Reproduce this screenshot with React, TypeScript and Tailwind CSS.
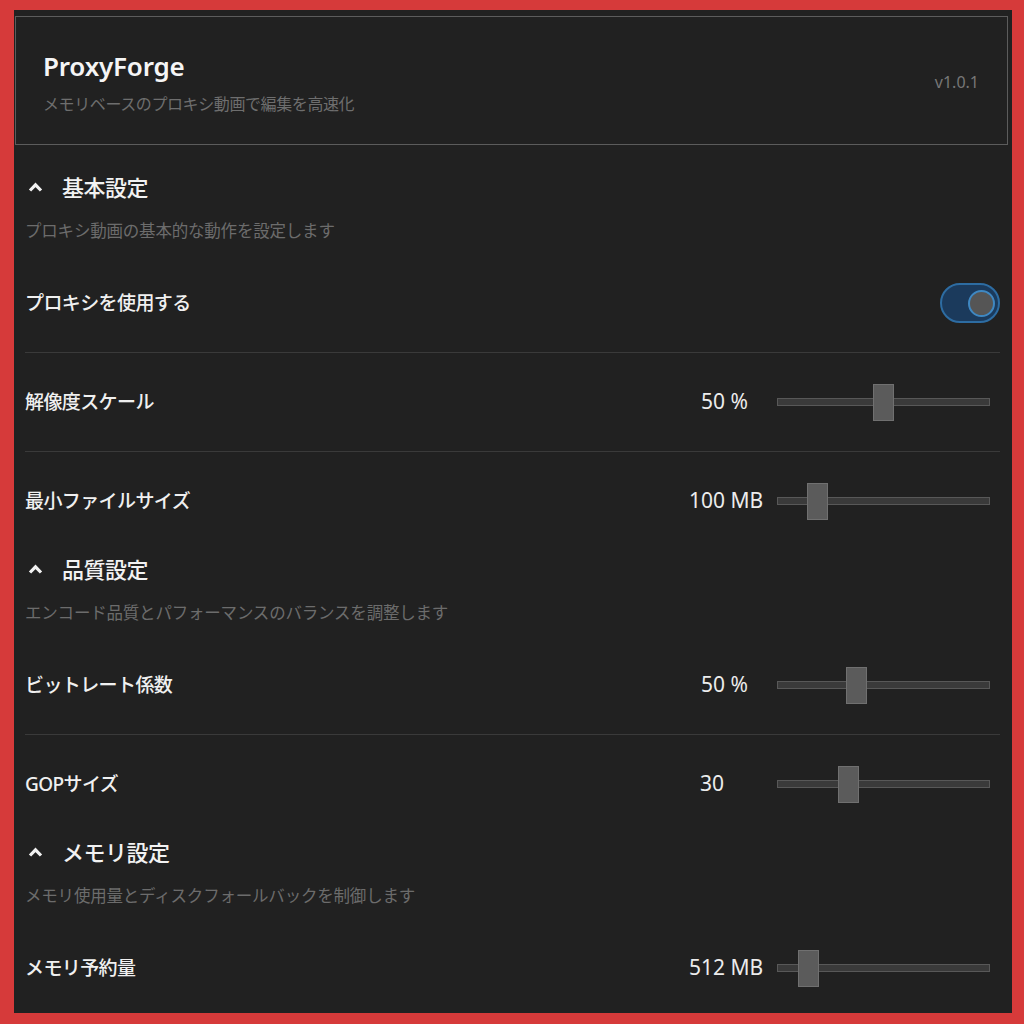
import React from "react"

const font = { fontFamily: '"Noto Sans", "Noto Sans CJK JP", sans-serif' }

type SliderRow = { label: string; value: string; pos: number; indent: number }

function ChevronUp() {
  return (
    <svg width="15" height="10" viewBox="0 0 15 10" className="ml-[3px]">
      <polyline points="2,8.5 7.5,2.8 13,8.5" fill="none" stroke="#f2f2f2" strokeWidth="3.2" strokeLinejoin="miter" />
    </svg>
  )
}

function Slider({ pos }: { pos: number }) {
  return (
    <div className="relative mr-[10px] flex h-[37px] w-[213px] items-center">
      <div className="h-[8px] w-full border border-[#585858] bg-[#3a3a3a]" />
      <div
        className="absolute top-0 h-[37px] w-[21px] border border-[#707070] bg-[#5b5b5b]"
        style={{ left: `${pos}px` }}
      />
    </div>
  )
}

function Row({ label, value, pos, indent }: SliderRow) {
  return (
    <div className="flex h-[98px] shrink-0 items-center">
      <div className="flex-1 text-[19px] font-medium tracking-[-0.6px] text-[#f0f0f0]">{label}</div>
      <div className="w-[97px] text-[21px] text-[#ececec]" style={{ paddingLeft: indent }}>
        {value}
      </div>
      <Slider pos={pos} />
    </div>
  )
}

function Section({ title, desc, children, first }: { title: string; desc: string; children: React.ReactNode; first?: boolean }) {
  return (
    <section className={first ? "shrink-0" : "mt-[4px] shrink-0"}>
      <div className="flex h-[30px] items-center">
        <ChevronUp />
        <span className="ml-[19px] text-[22px] font-medium tracking-[-0.5px] text-[#f2f2f2]">{title}</span>
      </div>
      <p className="mt-[17px] h-[24px] text-[16.5px] leading-[24px] tracking-[-0.2px] text-[#6c6c6c]">{desc}</p>
      <div className="mt-[11px]">{children}</div>
    </section>
  )
}

const Divider = () => <div className="h-px shrink-0 bg-[#3a3a3a]" />

export default function App() {
  return (
    <div className="flex h-[1024px] w-[1024px] bg-[#d63a3a] pt-[10px] pl-[14px] pr-[12px] pb-[11px]" style={font}>
      <div className="flex flex-1 flex-col overflow-hidden bg-[#212121]">
        <header className="ml-[1px] mr-[4px] mt-[6px] flex h-[129px] shrink-0 items-center border border-[#5c5c5c] pl-[27px] pr-[28px]">
          <div className="flex-1 pt-[4px]">
            <h1 className="h-[32px] text-[26px] font-semibold leading-[32px] tracking-[-0.2px] text-[#f5f5f5]">ProxyForge</h1>
            <p className="mt-[10px] h-[24px] text-[16px] leading-[24px] tracking-[-0.4px] text-[#6e6e6e]">
              メモリベースのプロキシ動画で編集を高速化
            </p>
          </div>
          <span className="pt-[3px] text-[16px] text-[#777777]">v1.0.1</span>
        </header>

        <div className="mt-[27px] flex shrink-0 flex-col pl-[11px] pr-[12px]">
          <Section first title="基本設定" desc="プロキシ動画の基本的な動作を設定します">
            <div className="flex h-[98px] items-center">
              <div className="flex-1 text-[19px] font-medium tracking-[-0.6px] text-[#f0f0f0]">プロキシを使用する</div>
              <div className="flex h-[40px] w-[60px] items-center justify-end rounded-full border-2 border-[#2d6ca2] bg-[#1b3a5c] pr-[3px]">
                <div className="h-[27px] w-[27px] rounded-full border-2 border-[#3f88c2] bg-[#555555]" />
              </div>
            </div>
            <Divider />
            <Row label="解像度スケール" value="50 %" pos={96} indent={21} />
            <Divider />
            <Row label="最小ファイルサイズ" value="100 MB" pos={30} indent={9} />
          </Section>

          <Section title="品質設定" desc="エンコード品質とパフォーマンスのバランスを調整します">
            <Row label="ビットレート係数" value="50 %" pos={69} indent={21} />
            <Divider />
            <Row label="GOPサイズ" value="30" pos={61} indent={20} />
          </Section>

          <Section title="メモリ設定" desc="メモリ使用量とディスクフォールバックを制御します">
            <Row label="メモリ予約量" value="512 MB" pos={21} indent={9} />
          </Section>
        </div>
      </div>
    </div>
  )
}
